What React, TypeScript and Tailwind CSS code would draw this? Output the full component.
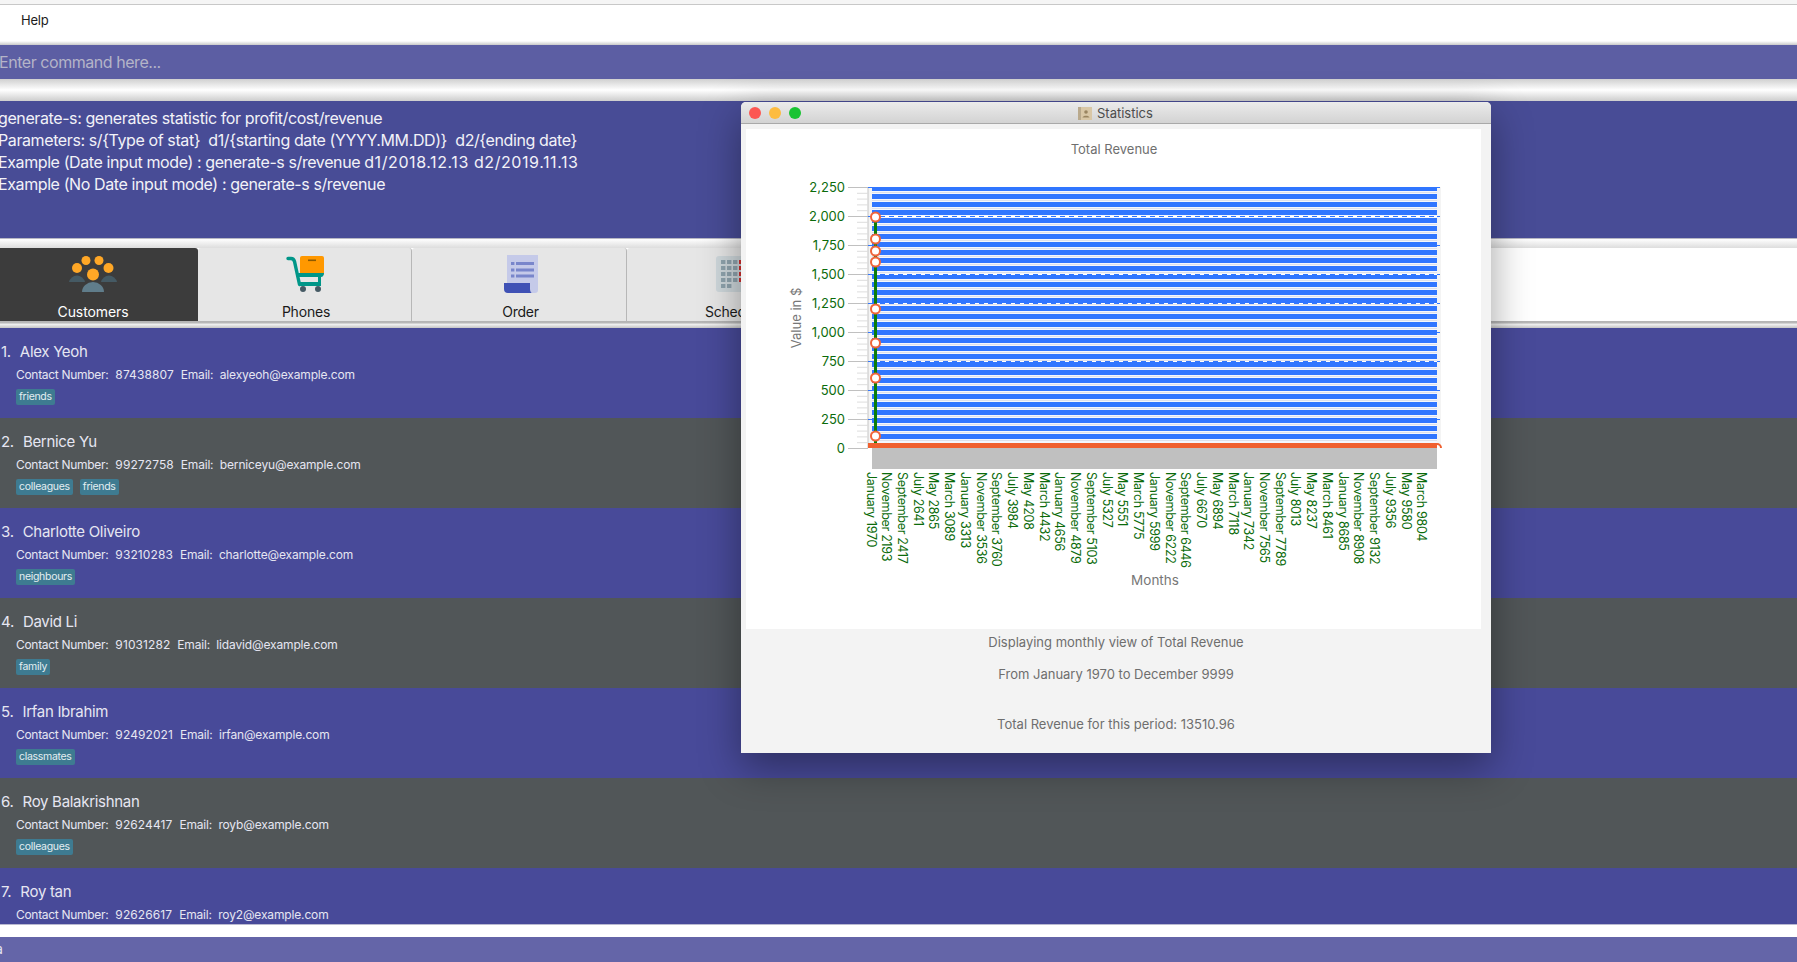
import React from "react";

const persons = [
  { name: "Alex Yeoh", phone: "87438807", email: "alexyeoh@example.com", tags: ["friends"] },
  { name: "Bernice Yu", phone: "99272758", email: "berniceyu@example.com", tags: ["colleagues", "friends"] },
  { name: "Charlotte Oliveiro", phone: "93210283", email: "charlotte@example.com", tags: ["neighbours"] },
  { name: "David Li", phone: "91031282", email: "lidavid@example.com", tags: ["family"] },
  { name: "Irfan Ibrahim", phone: "92492021", email: "irfan@example.com", tags: ["classmates"] },
  { name: "Roy Balakrishnan", phone: "92624417", email: "royb@example.com", tags: ["colleagues"] },
  { name: "Roy tan", phone: "92626617", email: "roy2@example.com", tags: [] as string[] },
];

const monthLabels = [
  "January 1970", "November 2193", "September 2417", "July 2641", "May 2865", "March 3089",
  "January 3313", "November 3536", "September 3760", "July 3984", "May 4208", "March 4432",
  "January 4656", "November 4879", "September 5103", "July 5327", "May 5551", "March 5775",
  "January 5999", "November 6222", "September 6446", "July 6670", "May 6894", "March 7118",
  "January 7342", "November 7565", "September 7789", "July 8013", "May 8237", "March 8461",
  "January 8685", "November 8908", "September 9132", "July 9356", "May 9580", "March 9804",
];

const yTicks = ["2,250", "2,000", "1,750", "1,500", "1,250", "1,000", "750", "500", "250", "0"];
const dashedTicks = ["2,000", "1,500", "1,250", "750"];
const pointYs = [217, 239, 251, 262, 309, 343, 378, 436];

const CustomersIcon = () => (
  <svg width="48" height="48" viewBox="0 0 48 48">
    <path d="M0 28a8.2 8.2 0 0 1 16 0z" fill="#455a64" />
    <path d="M32 28a8.2 8.2 0 0 1 16 0z" fill="#455a64" />
    <path d="M13 38a11 10 0 0 1 22 0z" fill="#607d8b" />
    <circle cx="8" cy="14" r="5" fill="#ffa726" />
    <circle cx="17" cy="6.500" r="4.500" fill="#ffa726" />
    <circle cx="30" cy="6.500" r="4.500" fill="#ffa726" />
    <circle cx="39.500" cy="14" r="5" fill="#ffa726" />
    <circle cx="24" cy="20.500" r="6" fill="#ffa726" />
  </svg>
);

const CartIcon = () => (
  <svg width="48" height="48" viewBox="0 0 48 48">
    <rect x="18" y="2" width="24" height="19" rx="2" fill="#ff9800" />
    <rect x="26" y="5.500" width="8" height="1.600" fill="#8d5a00" />
    <path d="M6 4.500h3c2 0 3 1 3.500 3l5 23" fill="none" stroke="#009688" strokeWidth="3.400" strokeLinecap="round" />
    <path d="M16 19h26c0 2-1 4-3 4H17z" fill="#009688" />
    <rect x="18" y="28" width="21" height="4" fill="#009688" />
    <rect x="36" y="22" width="3" height="8" fill="#009688" />
    <circle cx="21" cy="35" r="3" fill="#455a64" />
    <circle cx="36" cy="35" r="3" fill="#455a64" />
  </svg>
);

const OrderIcon = () => (
  <svg width="48" height="48" viewBox="0 0 48 48">
    <path d="M10 1h31v35a3 3 0 0 1-3 3H10z" fill="#c5cae9" />
    <g fill="#7986cb">
      <rect x="14" y="8" width="3.400" height="3" />
      <rect x="14" y="14.500" width="3.400" height="3" />
      <rect x="14" y="20.500" width="3.400" height="3" />
      <rect x="19" y="8" width="18" height="3" />
      <rect x="19" y="14.500" width="18" height="3" />
      <rect x="19" y="20.500" width="18" height="3" />
    </g>
    <path d="M7 29h26v6c0 2 1 4 2 4H11a4 4 0 0 1-4-4z" fill="#3f51b5" />
  </svg>
);

const ScheduleIcon = () => (
  <svg width="48" height="48" viewBox="0 0 48 48">
    <rect x="5" y="2" width="40" height="36" rx="3" fill="#cfd8dc" />
    {[6, 12, 18, 24, 30].map((y) =>
      [10, 16, 22].slice(0, y === 30 ? 2 : 3).map((x) => (
        <rect key={`${x}-${y}`} x={x} y={y} width="4.400" height="4" fill="#90a4ae" />
      ))
    )}
    {[6, 12, 18, 24].map((y) => (
      <rect key={y} x="28" y={y} width="4.400" height="4" fill="#d32f2f" />
    ))}
  </svg>
);

const tabs = [
  { label: "Phones", icon: <CartIcon />, width: "w-[214px]" },
  { label: "Order", icon: <OrderIcon />, width: "w-[215px]" },
  { label: "Schedule", icon: <ScheduleIcon />, width: "w-[214px]" },
];

const RevenueChart = () => (
  <svg viewBox="746 129 735 500" width="735" height="500" className="block font-['Inter',sans-serif]">
    <text x="1114" y="154" textAnchor="middle" fontSize="13" fill="#6f6f6f">Total Revenue</text>
    <text transform="translate(801 318) rotate(-90)" textAnchor="middle" fontSize="13" fill="#777777">Value in $</text>
    <text x="1155" y="585" textAnchor="middle" fontSize="13.500" fill="#777777">Months</text>

    <rect x="868" y="187" width="573" height="261" fill="#f4f4f4" />
    <line x1="868" y1="187" x2="868" y2="448" stroke="#c4c4c4" />
    {yTicks.map((t, i) => {
      const y = 187.5 + i * 29;
      return (
        <g key={t}>
          <line x1="848" y1={y} x2="868" y2={y} stroke="#c0c0c0" />
          <text x="845" y={y + 4.5} textAnchor="end" fontSize="13" fill="#0b6b0b">{t}</text>
          {i < 9 &&
            [1, 2, 3, 4].map((m) => (
              <line key={m} x1="857" y1={y + m * 5.8} x2="868" y2={y + m * 5.8} stroke="#dddddd" />
            ))}
        </g>
      );
    })}

    {/* bars are so dense they read as stripes */}
    <rect x="872" y="187" width="565" height="256" fill="#f4f6fd" />
    {Array.from({ length: 32 }).map((_, i) => (
      <g key={i}>
        <rect x="872" y={i === 0 ? 187 : 186 + i * 8} width="565" height={i === 0 ? 4 : 5} fill="#3076ff" />
        <rect x="872" y={192 + i * 8} width="565" height="1" fill="#dde0ea" />
      </g>
    ))}
    {yTicks.slice(0, 9).map((t, i) => {
      const y = 187.5 + i * 29;
      return (
        <g key={t}>
          <line x1="868" y1={y} x2="872" y2={y} stroke="#3076ff" />
          <line x1="1437" y1={y} x2="1440" y2={y} stroke="#3076ff" />
          {dashedTicks.includes(t) && (
            <>
              <line x1="872" y1={y} x2="1437" y2={y} stroke="#3076ff" />
              <line x1="876" y1={y} x2="1437" y2={y} stroke="#ffffff" strokeDasharray="4 5" />
            </>
          )}
        </g>
      );
    })}

    <rect x="872" y="448" width="565" height="21" fill="#c0c0c0" />
    <circle cx="1437" cy="448" r="4" fill="#ffffff" stroke="#f0602f" strokeWidth="2" />
    <rect x="868" y="443" width="569" height="5" fill="#f0602f" />
    <rect x="1437" y="448" width="6" height="6" fill="#ffffff" />
    <rect x="1428" y="448" width="9" height="6" fill="#c0c0c0" />
    <line x1="875.500" y1="217" x2="875.500" y2="443" stroke="#0a7d0a" strokeWidth="3" />
    {pointYs.map((y) => (
      <circle key={y} cx="875.500" cy={y} r="4.500" fill="#ffffff" stroke="#f0643a" strokeWidth="2" />
    ))}

    {monthLabels.map((m, i) => (
      <text key={m} transform={`translate(${866.5 + i * 15.74} 472) rotate(90)`} fontSize="12.500" letterSpacing="-0.3" fill="#0b6b0b">
        {m}
      </text>
    ))}
  </svg>
);

const StatisticsWindow = () => (
  <div className="absolute left-[741px] top-[102px] w-[750px] h-[651px] flex flex-col bg-[#f3f3f3] rounded-t-[5px] shadow-[0_14px_40px_rgba(0,0,0,0.38)]">
    <div className="h-[22px] shrink-0 flex items-center relative bg-gradient-to-b from-[#ebebeb] to-[#d3d3d3] border-b border-[#a9a9a9] rounded-t-[5px]">
      <div className="flex gap-[8px] pl-[8px]">
        <span className="w-3 h-3 rounded-full bg-[#fc5753]" />
        <span className="w-3 h-3 rounded-full bg-[#fdbc40]" />
        <span className="w-3 h-3 rounded-full bg-[#19c332]" />
      </div>
      <div className="absolute left-[337px] top-[5px] flex items-center gap-[5px]">
        <svg width="14" height="13" viewBox="0 0 14 13">
          <rect width="14" height="13" fill="#d9c7a6" />
          <rect width="3" height="13" fill="#b9a98c" />
          <circle cx="8" cy="5" r="1.800" fill="#9a8560" />
          <path d="M4.500 10.500c.5-2.500 6.500-2.500 7 0z" fill="#9a8560" />
        </svg>
        <span className="text-[13px] leading-none text-[#4c4c4c]">Statistics</span>
      </div>
    </div>
    <div className="ml-[5px] mt-[5px] w-[735px] h-[500px] bg-white shrink-0">
      <RevenueChart />
    </div>
    <div className="flex flex-col items-center text-[13px] text-[#6e6e6e] leading-4">
      <div className="mt-[5px]">Displaying monthly view of Total Revenue</div>
      <div className="mt-[16px]">From January 1970 to December 9999</div>
      <div className="mt-[34px]">Total Revenue for this period: 13510.96</div>
    </div>
  </div>
);

export default function App() {
  return (
    <div className="relative w-[1797px] h-[962px] overflow-hidden flex flex-col bg-white font-['Inter',sans-serif]">
      <div className="h-[5px] bg-[#f5f5f5] border-b border-[#c8c8c8] shrink-0" />
      <div className="h-[40px] shrink-0 flex items-center pb-[8px] pl-[21px] bg-gradient-to-b from-white from-90% to-[#c9c9c9] relative">
        <span className="absolute left-[-24px] text-[13px] text-[#222222]">File</span>
        <span className="text-[13px] tracking-[-0.2px] text-[#1c1c1c]">Help</span>
      </div>

      <div className="h-[34px] shrink-0 flex items-center bg-[#5c5ea3]">
        <span className="-ml-[1px] text-[16px] tracking-[-0.45px] text-[#b4b4c8]">Enter command here...</span>
      </div>
      <div className="h-[22px] shrink-0 bg-gradient-to-b from-[#d0d0d0] via-white to-[#cdcdcd]" />

      <div className="h-[138px] shrink-0 bg-[#484c96] border-b border-[#b8b8c4] pt-[6px] text-[16px] leading-[22px] tracking-[-0.4px] text-[#f2f2f8] whitespace-pre">
        <div className="-ml-[2px]">generate-s: generates statistic for profit/cost/revenue</div>
        <div className="-ml-[2px]">Parameters: s/{"{Type of stat}"}  d1/{"{starting date (YYYY.MM.DD)}"}  d2/{"{ending date}"}</div>
        <div className="-ml-[2px]">
          Example (Date input mode) : generate-s s/revenue <span className="tracking-[0.58px]">d1/2018.12.13 d2/2019.11.13</span>
        </div>
        <div className="-ml-[2px]">Example (No Date input mode) : generate-s s/revenue</div>
      </div>
      <div className="h-[9px] shrink-0 bg-gradient-to-b from-white to-[#dddddd]" />

      <div className="h-[73px] shrink-0 flex">
        <div className="w-[198px] shrink-0 flex flex-col items-center bg-[#3c3c3c] rounded-tr-[3px] pt-[6px]">
          <div className="-ml-[12px] flex flex-col items-center">
            <CustomersIcon />
            <span className="mt-[1px] text-[14px] leading-[18px] tracking-[-0.1px] text-white">Customers</span>
          </div>
        </div>
        {tabs.map((t) => (
          <div key={t.label} className={`${t.width} shrink-0 flex flex-col items-center bg-[#e6e6e6] border-r border-[#b7b7b7] rounded-t-[3px] pt-[6px] pl-[3px]`}>
            {t.icon}
            <span className="mt-[1px] text-[14px] leading-[18px] tracking-[-0.2px] text-[#1a1a1a]">{t.label}</span>
          </div>
        ))}
      </div>
      <div className="h-[7px] shrink-0 bg-gradient-to-b from-[#b5b5b5] from-20% via-[#eeeeee] to-[#c4c4c4]" />

      <div className="h-[597px] shrink-0 overflow-hidden border-b border-[#b9b9d0]">
        {persons.map((p, i) => (
          <div key={p.name} className={`h-[90px] pt-[14px] overflow-hidden text-[#e6e6f2] ${i % 2 === 0 ? "bg-[#484a99]" : "bg-[#515658]"}`}>
            <div className="h-[20px] pl-[1px] text-[15px] leading-[20px] tracking-[-0.3px] whitespace-pre">
              <span>{i + 1}.</span>
              <span className="ml-[9px]">{p.name}</span>
            </div>
            <div className="pl-[16px] mt-[5px] text-[12px] leading-[16px] whitespace-pre">
              <span className="tracking-[-0.3px]">Contact Number:</span>
              <span className="tracking-[0.1px]">{`  ${p.phone}  `}</span>
              <span className="tracking-[-0.2px]">Email:</span>
              <span className="tracking-[-0.15px]">{`  ${p.email}`}</span>
            </div>
            <div className="pl-[16px] mt-[6px] flex gap-[7px]">
              {p.tags.map((tag) => (
                <span key={tag} className="h-4 px-[3px] flex items-center rounded-[2px] bg-[#3e7b91] text-[10.5px] tracking-[-0.3px] leading-none text-[#e4eef2]">
                  {tag}
                </span>
              ))}
            </div>
          </div>
        ))}
      </div>
      <div className="h-[12px] shrink-0 bg-white" />
      <div className="flex-1 bg-[#6465a8] flex items-center">
        <span className="-ml-[24px] text-[13px] text-[#e6e6f2]">data</span>
      </div>

      <StatisticsWindow />
    </div>
  );
}
